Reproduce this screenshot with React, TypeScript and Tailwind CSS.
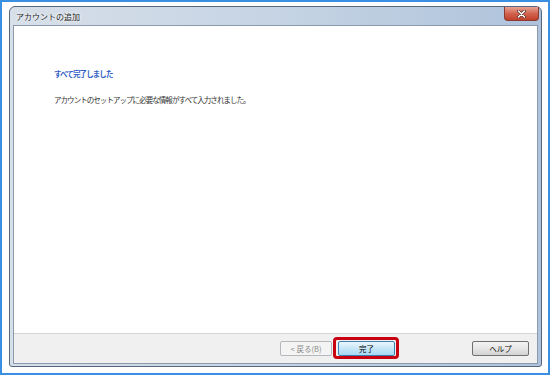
import React from 'react';

const jp = '[font-family:"Noto_Sans_CJK_JP","Noto_Sans",sans-serif]';

function WinButton({ label, kind }: { label: string; kind: 'normal' | 'default' | 'disabled' }) {
  let cls = 'border-[#707070] bg-gradient-to-b from-[#f3f3f3] via-[#e6e6e6] to-[#d3d3d3] text-[#111]';
  if (kind === 'default') cls = 'border-[#3c7fb1] bg-gradient-to-b from-[#eaf6fd] via-[#c6e6f8] to-[#a7d9f5] text-[#000]';
  if (kind === 'disabled') cls = 'border-[#b4b8bc] bg-[#f4f4f4] text-[#8a8a8a]';
  return (
    <div className={`h-[15px] w-full flex items-center justify-center border rounded-[2px] text-[7.5px] leading-none ${cls}`}>
      {label}
    </div>
  );
}

export default function App() {
  return (
    <div className={`w-[550px] h-[375px] border-2 border-[#3b8fe2] bg-white pt-[4px] pl-[7px] pr-[6px] pb-[6px] flex ${jp}`}>
      <div className="flex-1 flex flex-col border border-[#56667c] rounded-t-[6px] rounded-b-[3px] bg-gradient-to-r from-[#d7dfe9] via-[#c6d4e4] to-[#aec3db] px-[3px] pb-[2px]">
        {/* title bar */}
        <div className="h-[18px] flex items-start justify-between shrink-0">
          <span className="self-center ml-[3px] mt-[1px] text-[8px] leading-none text-[#222] [text-shadow:0_0_4px_white,0_0_2px_white]">
            アカウントの追加
          </span>
          <div className="mt-0 mr-[-1px] w-[35px] h-[14px] rounded-b-[4px] border border-t-0 border-[#8a3a30] bg-gradient-to-b from-[#e6a394] via-[#d2644f] to-[#c0402b] flex items-center justify-center">
            <svg width="9" height="8" viewBox="0 0 9 8">
              <path d="M1.5 1 L7.5 7 M7.5 1 L1.5 7" stroke="#5a2a24" strokeWidth="3" strokeLinecap="round" />
              <path d="M1.5 1 L7.5 7 M7.5 1 L1.5 7" stroke="#ffffff" strokeWidth="1.6" strokeLinecap="round" />
            </svg>
          </div>
        </div>
        {/* inner panel */}
        <div className="flex-1 flex flex-col border border-[#8c9aae]">
          <div className="flex-1 bg-white pl-[40px] pt-[43px]">
            <div className="text-[7.5px] leading-[10px] tracking-[-0.9px] font-bold text-[#2f5fc4]">すべて完了しました</div>
            <div className="mt-[16px] text-[7.5px] leading-[10px] tracking-[-0.95px] text-[#333]">
              アカウントのセットアップに必要な情報がすべて入力されました。
            </div>
          </div>
          <div className="h-[30px] shrink-0 border-t border-[#d4d4d4] bg-[#f0f0f0] flex items-start justify-end pt-[7px] pr-[8px]">
            <div className="w-[52px]">
              <WinButton label="< 戻る(B)" kind="disabled" />
            </div>
            <div className="relative w-[57px] ml-[6px]">
              <WinButton label="完了" kind="default" />
              <div className="absolute -left-[5px] -right-[4px] -top-[4px] -bottom-[3px] border-[3px] border-[#c8000f] rounded-[4px]" />
            </div>
            <div className="w-[57px] ml-[77px]">
              <WinButton label="ヘルプ" kind="normal" />
            </div>
          </div>
        </div>
      </div>
    </div>
  );
}
